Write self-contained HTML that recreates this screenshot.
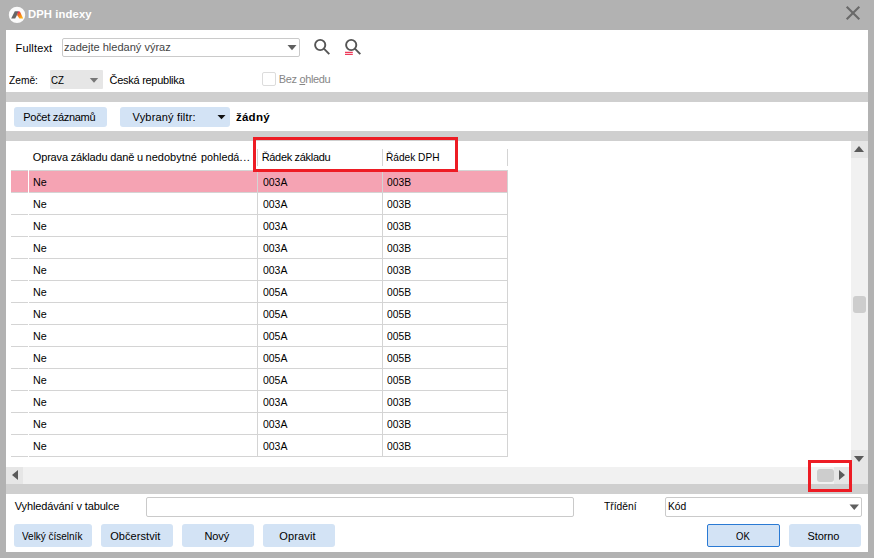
<!DOCTYPE html>
<html lang="cs">
<head>
<meta charset="utf-8">
<title>DPH indexy</title>
<style>
html,body{margin:0;padding:0;}
body{width:874px;height:558px;overflow:hidden;background:#b2b2b2;font-family:"Liberation Sans",sans-serif;font-size:11px;color:#000;position:relative;}
.a{position:absolute;}
.t{position:absolute;white-space:nowrap;line-height:14px;height:14px;}
.white{background:#fff;}
.band{background:#cfcfcf;}
.btn{position:absolute;background:#d3e3f5;border-radius:3px;height:23px;}
.inp{position:absolute;background:#fff;border:1px solid #cacaca;border-radius:2px;box-sizing:border-box;}
.hl{position:absolute;height:1px;background:#d4d4d4;left:11px;width:497px;}
.vl{position:absolute;width:1px;background:#d4d4d4;}
.red{position:absolute;border:3px solid #ed1c24;box-sizing:border-box;}
/*LS*/
#t1{letter-spacing:0.1px;transform:scaleX(1.025);transform-origin:0 0}
#t3{transform:scaleX(0.96);transform-origin:0 0}
#t4{transform:scaleX(0.928);transform-origin:0 0}
#t5{transform:scaleX(0.885);transform-origin:0 0}
#t6{letter-spacing:-0.28px}
#t7{letter-spacing:-0.35px}
#t8{letter-spacing:-0.30px}
#t9{letter-spacing:0.17px}
#t10{letter-spacing:0.2px;transform:scaleX(1.05);transform-origin:0 0}
#h1a{letter-spacing:-0.17px}
#h1c{transform:scaleX(0.98);transform-origin:0 0}
#h1d{letter-spacing:0.5px}
#h2{letter-spacing:-0.32px}
#h3{transform:scaleX(0.921);transform-origin:0 0}
.c1{transform:scaleX(0.975);transform-origin:0 0}
.c2{transform:scaleX(0.95);transform-origin:0 0}
.c3{transform:scaleX(0.935);transform-origin:0 0}
#t20{letter-spacing:-0.13px}
#t21{transform:scaleX(0.935);transform-origin:0 0}
#t22{transform:scaleX(0.935);transform-origin:0 0}
#t23{transform:scaleX(0.906);transform-origin:0 0}
#t24{letter-spacing:0.07px}
#t25{letter-spacing:-0.1px}
#t26{letter-spacing:0.15px}
#t27{transform:scaleX(0.865);transform-origin:0 0}
#t28{letter-spacing:-0.12px}
#t2{letter-spacing:0.16px}
/*ENDLS*/
</style>
</head>
<body>
<!-- window client -->
<div class="a white" style="left:6px;top:30px;width:862px;height:522px;"></div>

<!-- title bar -->
<svg class="a" style="left:8px;top:6px;" width="18" height="18" viewBox="0 0 18 18">
  <defs>
    <linearGradient id="lg" x1="0" y1="0" x2="0.6" y2="1">
      <stop offset="0" stop-color="#e8107a"/>
      <stop offset="0.45" stop-color="#f2691c"/>
      <stop offset="1" stop-color="#fbb316"/>
    </linearGradient>
  </defs>
  <circle cx="9" cy="8.9" r="8.2" fill="#fafafa"/>
  <polygon points="3.2,12.4 6.8,5.3 10.9,5.3 7.2,12.4" fill="#666"/>
  <polygon points="10.1,5.6 11.9,5.6 15.2,12.5 11.4,12.5 9,9" fill="url(#lg)"/>
</svg>
<div class="t" id="t1" style="left:28px;top:7px;color:#fff;font-weight:bold;">DPH indexy</div>
<svg class="a" style="left:843px;top:3px;" width="20" height="20" viewBox="0 0 20 20">
  <path d="M3.7 3.7 L16.3 16.3 M16.3 3.7 L3.7 16.3" stroke="#696969" stroke-width="2.1" fill="none"/>
</svg>

<!-- top panel -->
<div class="t" id="t2" style="left:15.6px;top:41px;">Fulltext</div>
<div class="inp" style="left:62px;top:38px;width:238px;height:19px;"></div>
<div class="t" id="t3" style="left:63.6px;top:40px;font-size:11.5px;color:#444;">zadejte hledaný výraz</div>
<svg class="a" style="left:286px;top:44px;" width="12" height="8"><polygon points="1.5,1 10.5,1 6,6.2" fill="#5f5f5f"/></svg>
<!-- search icons -->
<svg class="a" style="left:310px;top:36px;" width="24" height="22" viewBox="0 0 24 22">
  <circle cx="10.2" cy="9" r="5.1" fill="none" stroke="#555" stroke-width="1.9"/>
  <path d="M13.9 12.7 L19.3 18.1" stroke="#555" stroke-width="1.9" fill="none"/>
</svg>
<svg class="a" style="left:341px;top:36px;" width="24" height="22" viewBox="0 0 24 22">
  <circle cx="10.2" cy="9" r="5.1" fill="none" stroke="#555" stroke-width="1.9"/>
  <path d="M13.9 12.7 L19.3 18.1" stroke="#555" stroke-width="1.9" fill="none"/>
  <path d="M4 16.4 H11.8 M4 18.4 H11.8" stroke="#ee3a5a" stroke-width="1.2" fill="none"/>
</svg>

<div class="t" id="t4" style="left:8.9px;top:73px;">Země:</div>
<div class="a" style="left:49.5px;top:70px;width:53px;height:18.5px;background:#e6e6e6;border-radius:1px;"></div>
<div class="t" id="t5" style="left:51px;top:73px;">CZ</div>
<svg class="a" style="left:88px;top:76px;" width="12" height="8"><polygon points="1.8,2 10.2,2 6,6.7" fill="#777"/></svg>
<div class="t" id="t6" style="left:109.6px;top:73px;">Česká republika</div>
<div class="a" style="left:262px;top:72px;width:14px;height:14px;box-sizing:border-box;border:1px solid #dcdcdc;border-radius:2px;background:#fff;"></div>
<div class="t" id="t7" style="left:278.8px;top:72px;color:#868686;">Bez <span style="text-decoration:underline;">o</span>hledu</div>

<div class="a band" style="left:6px;top:92px;width:862px;height:10px;"></div>

<!-- filter bar -->
<div class="btn" style="left:14px;top:107px;width:93px;height:20px;"></div>
<div class="t" id="t8" style="left:23.3px;top:110px;">Počet záznamů</div>
<div class="btn" style="left:120px;top:107px;width:110px;height:20px;"></div>
<div class="t" id="t9" style="left:132.6px;top:110px;">Vybraný filtr:</div>
<svg class="a" style="left:216px;top:113px;" width="12" height="8"><polygon points="1.5,2 9.5,2 5.5,6.3" fill="#111"/></svg>
<div class="t" id="t10" style="left:235.9px;top:110px;font-weight:bold;">žádný</div>

<div class="a band" style="left:6px;top:131px;width:862px;height:10px;"></div>

<!-- grid -->
<div id="grid">
<div class="t" id="h1a" style="left:32.8px;top:150px;">Oprava základu daně u</div><div class="t" id="h1b" style="left:145.6px;top:150px;">nedobytné</div><div class="t" id="h1c" style="left:201.2px;top:150px;">pohledá</div><div class="t" id="h1d" style="left:239.6px;top:150px;">...</div>
<div class="t" id="h2" style="left:261.7px;top:150px;">Řádek základu</div>
<div class="t" id="h3" style="left:386.3px;top:150px;">Řádek DPH</div>
<div class="vl" style="left:257px;top:149px;height:17px;"></div>
<div class="vl" style="left:382px;top:149px;height:17px;"></div>
<div class="vl" style="left:507px;top:149px;height:17px;"></div>
<div class="a" style="left:11px;top:171px;width:497px;height:22px;background:#f5a3b3;"></div>
<div class="hl" style="top:170px;"></div>
<div class="hl" style="top:192px;"></div>
<div class="hl" style="top:214px;"></div>
<div class="hl" style="top:236px;"></div>
<div class="hl" style="top:258px;"></div>
<div class="hl" style="top:280px;"></div>
<div class="hl" style="top:302px;"></div>
<div class="hl" style="top:324px;"></div>
<div class="hl" style="top:346px;"></div>
<div class="hl" style="top:368px;"></div>
<div class="hl" style="top:390px;"></div>
<div class="hl" style="top:412px;"></div>
<div class="hl" style="top:434px;"></div>
<div class="hl" style="top:456px;"></div>
<div class="vl" style="left:28px;top:170px;height:287px;background:#fff;"></div>
<div class="vl" style="left:257px;top:171px;height:286px;"></div>
<div class="vl" style="left:382px;top:171px;height:286px;"></div>
<div class="vl" style="left:507px;top:171px;height:286px;"></div>
<div class="t c1" style="left:33px;top:175px;">Ne</div><div class="t c2" style="left:262.6px;top:175px;">003A</div><div class="t c3" style="left:387.3px;top:175px;">003B</div>
<div class="t c1" style="left:33px;top:197px;">Ne</div><div class="t c2" style="left:262.6px;top:197px;">003A</div><div class="t c3" style="left:387.3px;top:197px;">003B</div>
<div class="t c1" style="left:33px;top:219px;">Ne</div><div class="t c2" style="left:262.6px;top:219px;">003A</div><div class="t c3" style="left:387.3px;top:219px;">003B</div>
<div class="t c1" style="left:33px;top:241px;">Ne</div><div class="t c2" style="left:262.6px;top:241px;">003A</div><div class="t c3" style="left:387.3px;top:241px;">003B</div>
<div class="t c1" style="left:33px;top:263px;">Ne</div><div class="t c2" style="left:262.6px;top:263px;">003A</div><div class="t c3" style="left:387.3px;top:263px;">003B</div>
<div class="t c1" style="left:33px;top:285px;">Ne</div><div class="t c2" style="left:262.6px;top:285px;">005A</div><div class="t c3" style="left:387.3px;top:285px;">005B</div>
<div class="t c1" style="left:33px;top:307px;">Ne</div><div class="t c2" style="left:262.6px;top:307px;">005A</div><div class="t c3" style="left:387.3px;top:307px;">005B</div>
<div class="t c1" style="left:33px;top:329px;">Ne</div><div class="t c2" style="left:262.6px;top:329px;">005A</div><div class="t c3" style="left:387.3px;top:329px;">005B</div>
<div class="t c1" style="left:33px;top:351px;">Ne</div><div class="t c2" style="left:262.6px;top:351px;">005A</div><div class="t c3" style="left:387.3px;top:351px;">005B</div>
<div class="t c1" style="left:33px;top:373px;">Ne</div><div class="t c2" style="left:262.6px;top:373px;">005A</div><div class="t c3" style="left:387.3px;top:373px;">005B</div>
<div class="t c1" style="left:33px;top:395px;">Ne</div><div class="t c2" style="left:262.6px;top:395px;">003A</div><div class="t c3" style="left:387.3px;top:395px;">003B</div>
<div class="t c1" style="left:33px;top:417px;">Ne</div><div class="t c2" style="left:262.6px;top:417px;">003A</div><div class="t c3" style="left:387.3px;top:417px;">003B</div>
<div class="t c1" style="left:33px;top:439px;">Ne</div><div class="t c2" style="left:262.6px;top:439px;">003A</div><div class="t c3" style="left:387.3px;top:439px;">003B</div>
</div>

<!-- scrollbars -->
<div class="a" style="left:851px;top:141px;width:17px;height:326px;background:#f1f1f1;"></div>
<div class="a" style="left:851px;top:141px;width:17px;height:17px;background:#e6e6e6;"></div>
<div class="a" style="left:851px;top:450px;width:17px;height:34px;background:#e6e6e6;"></div>
<svg class="a" style="left:851px;top:141px;" width="17" height="17"><polygon points="3,11 13,11 8,5" fill="#5a5a5a"/></svg>
<svg class="a" style="left:851px;top:450px;" width="17" height="17"><polygon points="3,6 13,6 8,12" fill="#5a5a5a"/></svg>
<div class="a" style="left:853px;top:296px;width:13px;height:17px;background:#cdcdcd;border-radius:3px;"></div>

<div class="a" style="left:6px;top:467px;width:845px;height:17px;background:#f1f1f1;"></div>
<div class="a" style="left:6px;top:467px;width:17px;height:17px;background:#e6e6e6;"></div>
<div class="a" style="left:834px;top:467px;width:17px;height:17px;background:#e6e6e6;"></div>
<svg class="a" style="left:6px;top:467px;" width="17" height="17"><polygon points="12,3 12,13 6,8" fill="#5a5a5a"/></svg>
<svg class="a" style="left:834px;top:467px;" width="17" height="17"><polygon points="5,3 5,13 11,8" fill="#5a5a5a"/></svg>
<div class="a" style="left:817px;top:469px;width:17px;height:13px;background:#cdcdcd;border-radius:3px;"></div>

<div class="a band" style="left:6px;top:484px;width:862px;height:10px;"></div>

<!-- bottom panel -->
<div class="t" id="t20" style="left:14.8px;top:499px;">Vyhledávání v tabulce</div>
<div class="inp" style="left:146px;top:497px;width:428px;height:20px;"></div>
<div class="t" id="t21" style="left:603.5px;top:499px;">Třídění</div>
<div class="inp" style="left:665px;top:497px;width:197px;height:20px;"></div>
<div class="t" id="t22" style="left:667.8px;top:499px;">Kód</div>
<svg class="a" style="left:848px;top:503px;" width="13" height="9"><polygon points="1.5,1.5 11,1.5 6.25,7" fill="#5f5f5f"/></svg>

<div class="btn" style="left:14px;top:524px;width:78px;"></div>
<div class="t" id="t23" style="left:21.8px;top:529px;">Velký číselník</div>
<div class="btn" style="left:101px;top:524px;width:72px;"></div>
<div class="t" id="t24" style="left:110.2px;top:529px;">Občerstvit</div>
<div class="btn" style="left:182px;top:524px;width:72px;"></div>
<div class="t" id="t25" style="left:204.5px;top:529px;">Nový</div>
<div class="btn" style="left:263px;top:524px;width:72px;"></div>
<div class="t" id="t26" style="left:279.2px;top:529px;">Opravit</div>
<div class="btn" style="left:707px;top:524px;width:73px;box-sizing:border-box;border:1px solid #2a7ad4;border-radius:2px;"></div>
<div class="t" id="t27" style="left:735.7px;top:529px;">OK</div>
<div class="btn" style="left:789px;top:524px;width:72px;"></div>
<div class="t" id="t28" style="left:807.6px;top:529px;">Storno</div>

<!-- red annotations -->
<div class="red" style="left:253px;top:137px;width:205px;height:35px;"></div>
<div class="red" style="left:808px;top:460px;width:44px;height:32px;"></div>
</body>
</html>
